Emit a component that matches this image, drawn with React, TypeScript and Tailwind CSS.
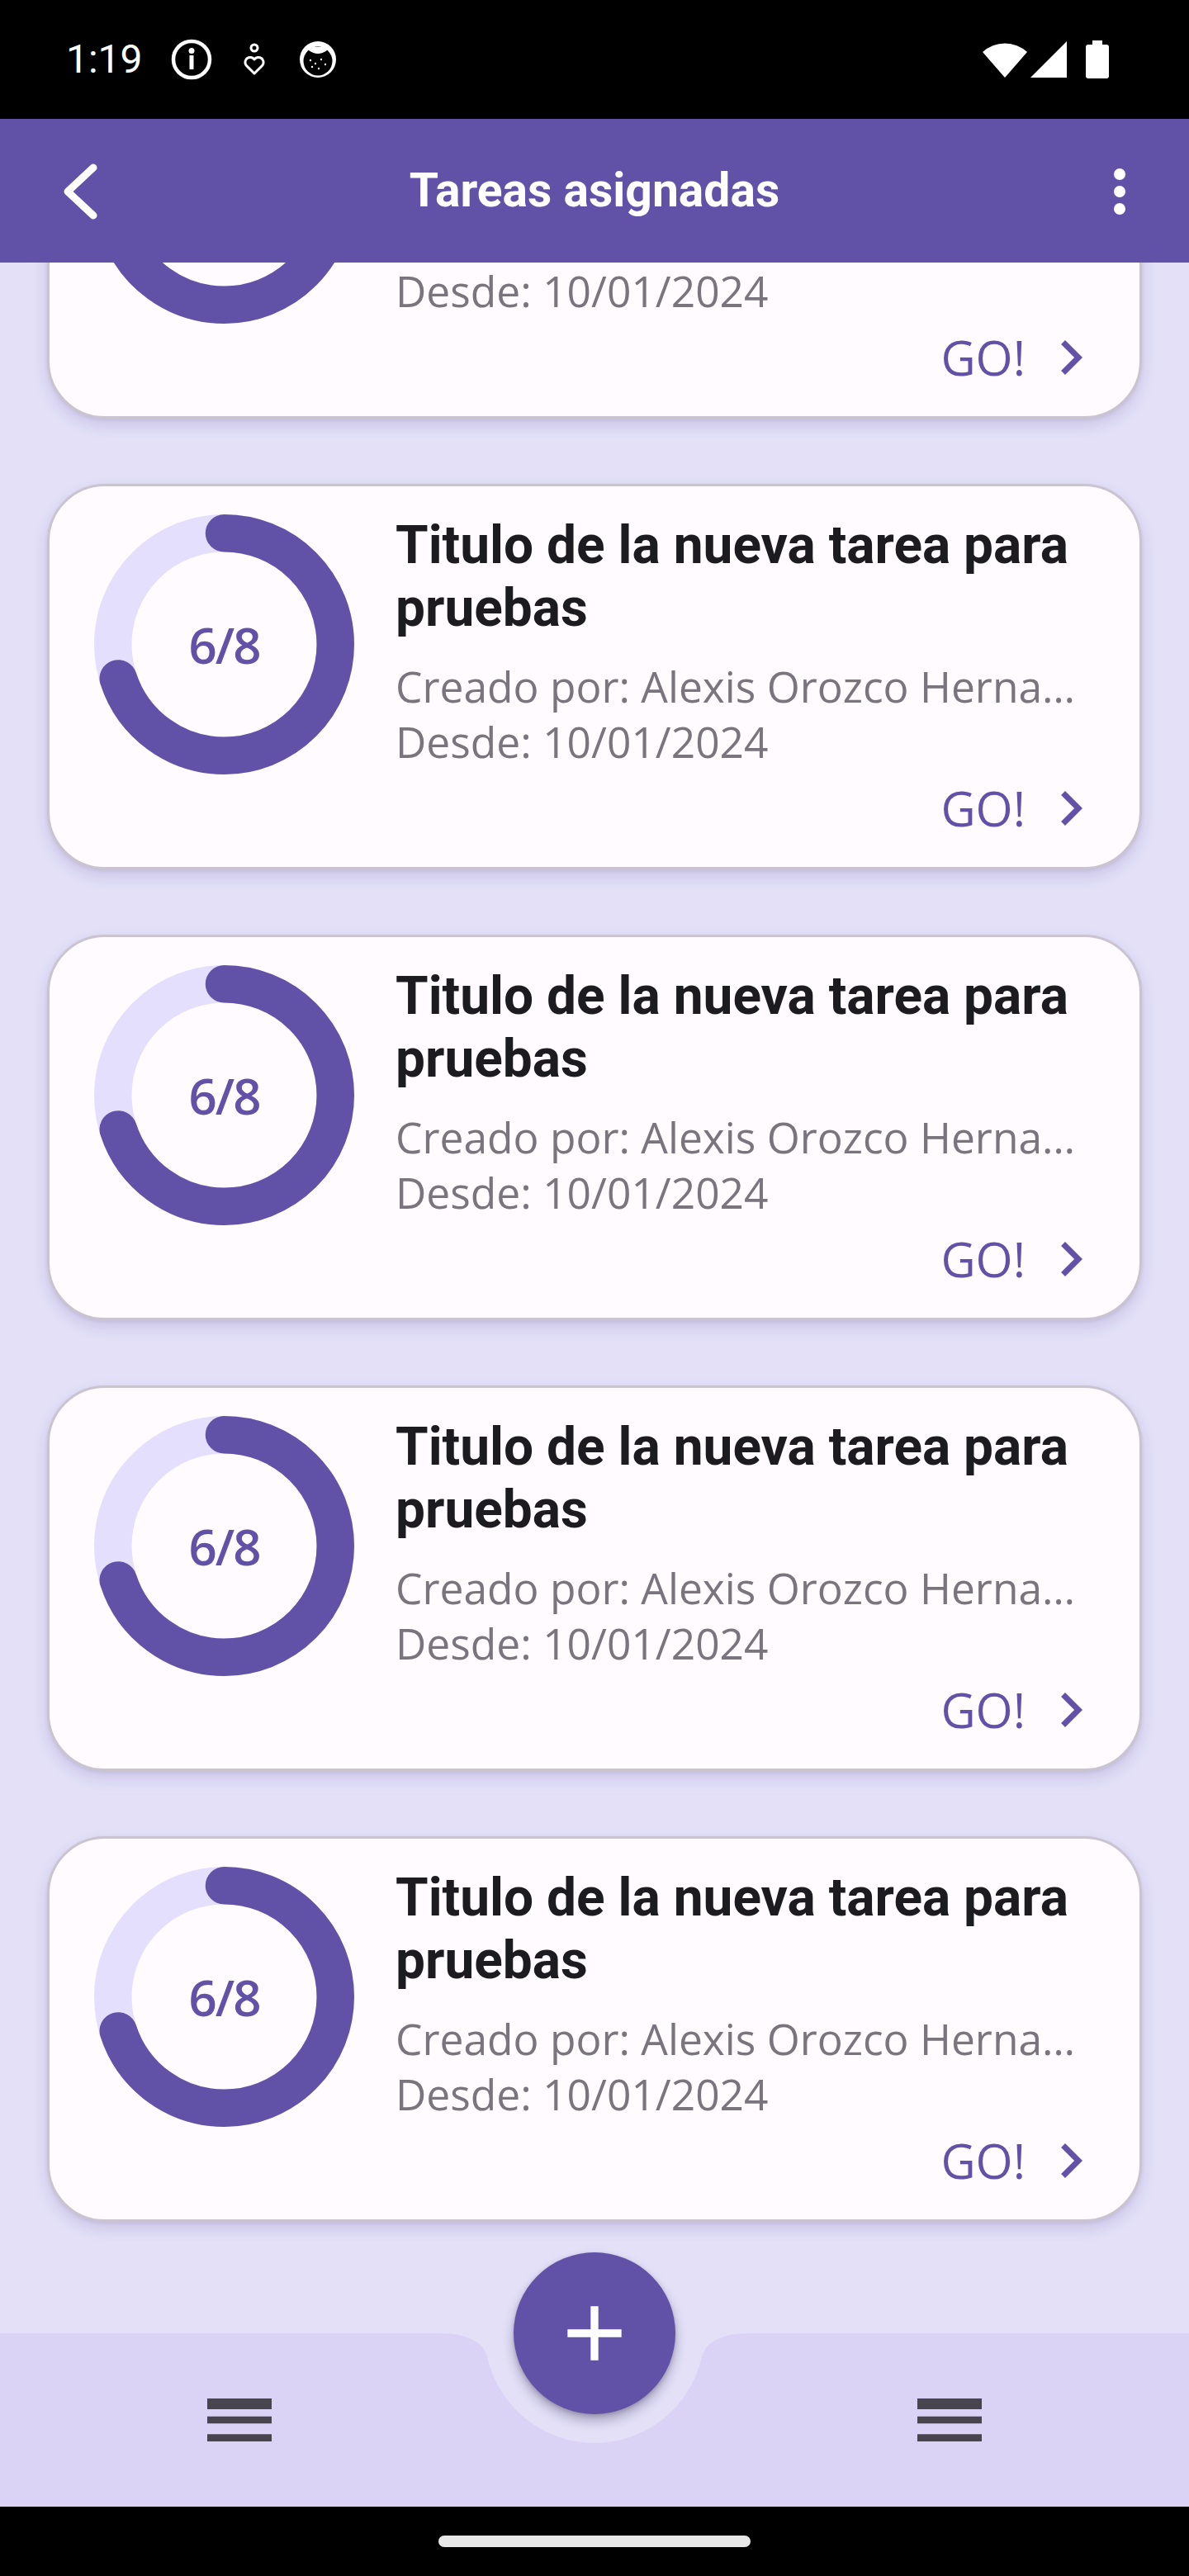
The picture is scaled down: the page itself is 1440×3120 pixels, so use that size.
import React from "react";

const tasks = [1, 2, 3, 4, 5];

function Donut() {
    const r = 134.75;
    const c = 2 * Math.PI * r;
    const done = (252 / 360) * c;
    return (
        <div className="relative h-[315px] w-[315px] shrink-0">
            <svg width="315" height="315" viewBox="0 0 315 315">
                <circle cx="157.5" cy="157.5" r={r} fill="none" stroke="#e3dffd" strokeWidth="45.5" />
                <circle
                    cx="157.5"
                    cy="157.5"
                    r={r}
                    fill="none"
                    stroke="#6152a8"
                    strokeWidth="45.5"
                    strokeLinecap="round"
                    strokeDasharray={`${done} ${c}`}
                    transform="rotate(-90 157.5 157.5)"
                />
            </svg>
            <div className="absolute inset-0 flex items-center justify-center font-['Open_Sans',sans-serif] text-[60px] font-semibold tracking-[-2px] text-[#6152a8]">
                6/8
            </div>
        </div>
    );
}

function TaskCard() {
    return (
        <div className="flex h-[467px] shrink-0 gap-[50px] rounded-[70px] border-[3px] border-[#cac4d0] bg-[#fffbfe] pl-[54px] pr-[41px] pt-[34px] shadow-[0_8px_18px_rgba(50,30,110,0.14),0_2px_4px_rgba(0,0,0,0.06)]">
            <Donut />
            <div className="flex min-w-0 flex-1 flex-col">
                <h2 className="font-['Roboto',sans-serif] text-[64px] font-bold leading-[75.6px] text-[#1c1b1f]">
                    Titulo de la nueva tarea para pruebas
                </h2>
                <div className="mt-[24px] pr-[19px] font-['Open_Sans',sans-serif] text-[51.5px] leading-[67px] text-[#79747e]">
                    <p className="truncate">Creado por: Alexis Orozco Hernandez</p>
                    <p>Desde: 10/01/2024</p>
                </div>
                <div className="mt-[5px] flex items-center justify-end gap-[13px]">
                    <span className="font-['Open_Sans',sans-serif] text-[58px] leading-none text-[#6152a8]">GO!</span>
                    <svg width="84" height="84" viewBox="0 0 24 24" fill="#6152a8">
                        <path d="M10 6L8.59 7.41 13.17 12l-4.58 4.59L10 18l6-6z" />
                    </svg>
                </div>
            </div>
        </div>
    );
}

function MenuIcon() {
    return (
        <svg width="104" height="104" viewBox="0 0 24 24" fill="#49454f">
            <path d="M3 18h18v-2H3v2zm0-5h18v-2H3v2zm0-6v2h18V6H3z" />
        </svg>
    );
}

function StatusBar() {
    return (
        <div className="flex h-[144px] shrink-0 items-center justify-between bg-black pl-[80px] pr-[97px]">
            <div className="flex items-center">
                <span className="font-['Roboto',sans-serif] text-[48px] leading-none text-white">1:19</span>
                <svg className="ml-[33px]" width="52" height="52" viewBox="0 0 52 52">
                    <circle cx="26" cy="26" r="22" fill="none" stroke="white" strokeWidth="4.5" />
                    <circle cx="26" cy="15.5" r="3.5" fill="white" />
                    <rect x="23.5" y="21" width="5" height="17" fill="white" />
                </svg>
                <svg className="ml-[34px]" width="32" height="40" viewBox="0 0 32 40">
                    <circle cx="16" cy="6" r="4" fill="none" stroke="white" strokeWidth="3" />
                    <path
                        d="M16 37 L6 27 A5.5 5.5 0 0 1 16 20 A5.5 5.5 0 0 1 26 27 Z"
                        fill="none"
                        stroke="white"
                        strokeWidth="3"
                        strokeLinejoin="round"
                    />
                </svg>
                <svg className="ml-[37px]" width="48" height="48" viewBox="0 0 48 48">
                    <circle cx="24" cy="24" r="22" fill="white" />
                    <circle cx="24" cy="26" r="17.5" fill="black" />
                    <path d="M13 13 Q24 21 35 13 L35 9 L13 9 Z" fill="white" />
                    <circle cx="15" cy="25" r="1.2" fill="white" />
                    <circle cx="21" cy="29" r="1.2" fill="white" />
                    <circle cx="28" cy="24" r="1.2" fill="white" />
                    <circle cx="33" cy="30" r="1.2" fill="white" />
                    <circle cx="25" cy="35" r="1.2" fill="white" />
                    <circle cx="17" cy="33" r="1.2" fill="white" />
                </svg>
            </div>
            <div className="flex items-center">
                <svg width="56" height="46" viewBox="0 0 56 46">
                    <path d="M28 45 L1 14 A40 40 0 0 1 55 14 Z" fill="white" />
                </svg>
                <svg className="ml-[2px]" width="46" height="46" viewBox="0 0 46 46">
                    <path d="M1 45 L45 45 L45 1 Z" fill="white" />
                </svg>
                <svg className="ml-[22px]" width="28" height="46" viewBox="0 0 28 46">
                    <rect x="8" y="0" width="12" height="7" fill="white" />
                    <rect x="0" y="5" width="28" height="41" rx="3" fill="white" />
                </svg>
            </div>
        </div>
    );
}

function Header() {
    return (
        <header className="flex h-[174px] shrink-0 items-center bg-[#6152a8] px-[60px]">
            <svg width="84" height="84" viewBox="0 0 84 84">
                <polyline
                    points="53,14 22,43 53,72"
                    fill="none"
                    stroke="white"
                    strokeWidth="9"
                    strokeLinecap="round"
                    strokeLinejoin="round"
                />
            </svg>
            <h1 className="flex-1 text-center font-['Roboto',sans-serif] text-[57px] font-bold text-white">
                Tareas asignadas
            </h1>
            <svg width="84" height="84" viewBox="0 0 84 84" fill="white">
                <circle cx="60" cy="22" r="7" />
                <circle cx="60" cy="43" r="7" />
                <circle cx="60" cy="64" r="7" />
            </svg>
        </header>
    );
}

function BottomBar() {
    return (
        <div className="relative h-[210px] shrink-0">
            <svg className="absolute inset-0" width="1440" height="210" viewBox="0 0 1440 210">
                <path
                    d="M0 0 L531 0 Q583.5 0 590.41 29.92 A133 133 0 0 0 849.59 29.92 Q856.5 0 909 0 L1440 0 L1440 210 L0 210 Z"
                    fill="#dad3f5"
                />
            </svg>
            <div className="relative flex h-full items-center justify-between px-[238px]">
                <MenuIcon />
                <MenuIcon />
            </div>
            <button className="absolute left-1/2 top-[-98px] flex h-[196px] w-[196px] -translate-x-1/2 items-center justify-center rounded-full bg-[#6152a8] shadow-[0_8px_14px_rgba(30,20,60,0.3),0_2px_5px_rgba(0,0,0,0.15)]">
                <svg width="112" height="112" viewBox="0 0 24 24" fill="white">
                    <path d="M19 13h-6v6h-2v-6H5v-2h6V5h2v6h6v2z" />
                </svg>
            </button>
        </div>
    );
}

export default function App() {
    return (
        <div className="flex h-[3120px] w-full flex-col bg-[#e3e0f8]">
            <StatusBar />
            <Header />
            <main className="min-h-0 flex-1 overflow-hidden">
                <div className="-mt-[278px] flex flex-col gap-[79px] px-[57px]">
                    {tasks.map(item => (
                        <TaskCard key={item} />
                    ))}
                </div>
            </main>
            <BottomBar />
            <div className="flex h-[84px] shrink-0 items-center justify-center bg-black">
                <div className="h-[14px] w-[378px] rounded-full bg-[#e8e8e8]" />
            </div>
        </div>
    );
}
